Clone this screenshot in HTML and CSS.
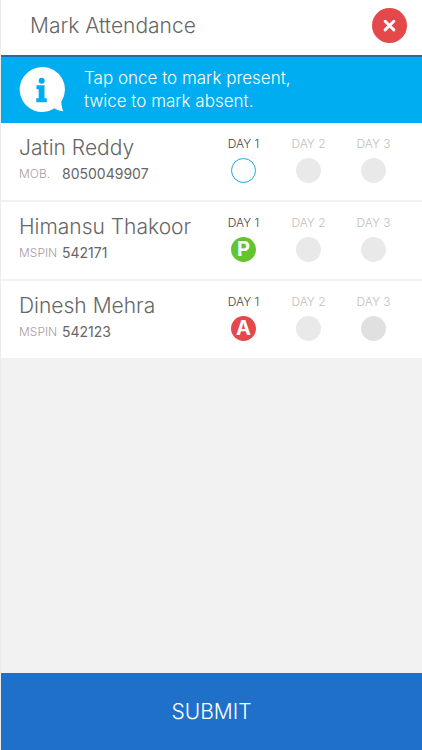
FILE: index.html
```html
<!DOCTYPE html>
<html lang="en">
<head>
<meta charset="utf-8">
<meta name="viewport" content="width=device-width, initial-scale=1">
<title>Mark Attendance</title>
<link rel="stylesheet" href="styles.css">
</head>
<body>
<header class="header">
  <h1 class="title">Mark Attendance</h1>
  <button class="close" type="button" aria-label="Close">
    <svg viewBox="0 0 36 36" aria-hidden="true"><path d="M13.500 13.700l9 8.800M22.500 13.700l-9 8.800"/></svg>
  </button>
</header>
<main class="main">
  <section class="banner">
    <svg class="info" viewBox="0 0 46 46" aria-hidden="true">
      <path class="bubble" d="M23 0a22.500 22.500 0 1 0 12.500 41.300C38 43 41 44.200 44.300 44.300C43 41.500 42.400 38 42.300 34.800A22.500 22.500 0 0 0 23 0z"/>
      <circle class="mark" cx="22.700" cy="13.700" r="3"/>
      <path class="mark" d="M17.500 18.200h8v13h2.300v4H17.300v-4h2.400v-9h-2.200z"/>
    </svg>
    <p class="hint">Tap once to mark present,<br>twice to mark absent.</p>
  </section>
  <ul class="list">
    <li class="row">
      <div class="person">
        <h2 class="name">Jatin Reddy</h2>
        <p class="id"><span class="id-label">MOB.</span><span>8050049907</span></p>
      </div>
      <div class="days">
        <label class="day current">DAY 1<button class="dot empty" type="button"></button></label>
        <label class="day">DAY 2<button class="dot" type="button" disabled></button></label>
        <label class="day">DAY 3<button class="dot" type="button" disabled></button></label>
      </div>
    </li>
    <li class="row">
      <div class="person">
        <h2 class="name">Himansu Thakoor</h2>
        <p class="id"><span class="id-label">MSPIN</span><span>542171</span></p>
      </div>
      <div class="days">
        <label class="day current">DAY 1<button class="dot present" type="button">P</button></label>
        <label class="day">DAY 2<button class="dot" type="button" disabled></button></label>
        <label class="day">DAY 3<button class="dot" type="button" disabled></button></label>
      </div>
    </li>
    <li class="row">
      <div class="person">
        <h2 class="name">Dinesh Mehra</h2>
        <p class="id"><span class="id-label">MSPIN</span><span>542123</span></p>
      </div>
      <div class="days">
        <label class="day current">DAY 1<button class="dot absent" type="button">A</button></label>
        <label class="day">DAY 2<button class="dot" type="button" disabled></button></label>
        <label class="day">DAY 3<button class="dot dim" type="button" disabled></button></label>
      </div>
    </li>
  </ul>
</main>
<button class="submit" type="submit">SUBMIT</button>
</body>
</html>
```
FILE: styles.css
```css
* {
  box-sizing: border-box;
  margin: 0;
  padding: 0;
}

body {
  display: flex;
  flex-direction: column;
  min-height: 100vh;
  border-left: 1px solid #ececec;
  background: #f2f2f2;
  color: #666;
  font-family: Inter, "Open Sans", sans-serif;
}

button {
  border: 0;
  font-family: inherit;
}

.header {
  display: flex;
  align-items: center;
  justify-content: space-between;
  padding: 8px 15px 12px 29px;
  border-bottom: 2px solid #276b9e;
  background: #fff;
}

.title {
  font-size: 21px;
  line-height: 28px;
  font-weight: 300;
}

.close {
  width: 35px;
  height: 35px;
  border-radius: 50%;
  background: #e5484a;
}

.close svg {
  display: block;
  width: 100%;
  fill: none;
  stroke: #fff;
  stroke-width: 3;
  stroke-linecap: round;
}

.main {
  flex: 1;
}

.banner {
  display: flex;
  align-items: center;
  gap: 19px;
  padding: 10px 18px;
  background: #00adf0;
  color: #fff;
}

.info {
  width: 46px;
  height: 46px;
}

.bubble {
  fill: #fff;
}

.mark {
  fill: #00adf0;
}

.hint {
  font-size: 17px;
  line-height: 23px;
  font-weight: 300;
}

.list {
  list-style: none;
}

.row {
  display: flex;
  justify-content: space-between;
  padding: 12px 16px 13px 18px;
  border-bottom: 2px solid #f2f2f2;
  background: #fff;
}

.name {
  font-size: 21px;
  line-height: 26px;
  font-weight: 300;
}

.id {
  display: flex;
  align-items: center;
  font-size: 14px;
  line-height: 26px;
}

.id-label {
  width: 43px;
  color: #a59ea1;
  font-size: 12px;
  font-weight: 300;
}

.days {
  display: grid;
  grid-template-columns: repeat(3, 65px);
}

.day {
  display: flex;
  flex-direction: column;
  align-items: center;
  gap: 5px;
  color: #c0c0c0;
  font-size: 12px;
  line-height: 18px;
  font-weight: 300;
}

.current {
  color: #444;
}

.dot {
  width: 25px;
  height: 25px;
  border-radius: 50%;
  background: #e9e9e9;
  color: #fff;
  font-size: 20px;
  line-height: 25px;
  font-weight: 700;
}

.empty {
  border: 1px solid #1ba8e4;
  background: #fff;
}

.present {
  background: #62c52f;
}

.absent {
  background: #e5484a;
}

.dim {
  background: #e0e0e0;
}

.submit {
  height: 77px;
  background: #1f70c8;
  color: #fff;
  font-size: 21px;
  font-weight: 300;
}
```
